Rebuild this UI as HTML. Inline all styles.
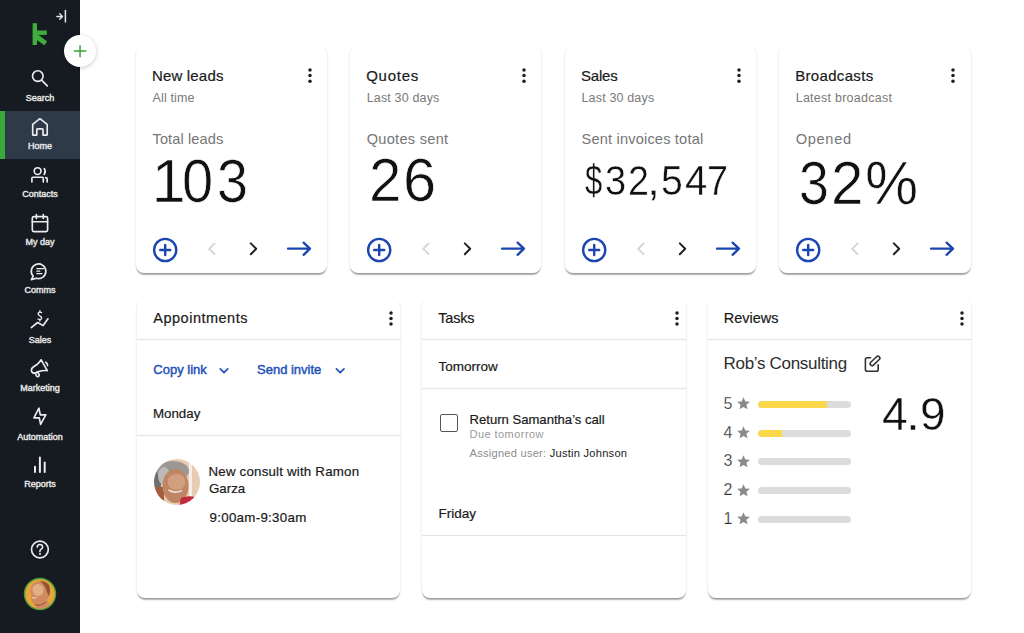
<!DOCTYPE html>
<html><head><meta charset="utf-8"><title>Keap dashboard</title>
<style>
html,body{margin:0;padding:0;width:1024px;height:633px;overflow:hidden;background:#ffffff;font-family:"Liberation Sans", sans-serif}
.t{position:absolute;white-space:nowrap}
</style></head><body>
<div style="position:absolute;left:0;top:0;width:80px;height:633px;background:#161b22"></div>
<div style="position:absolute;left:0;top:110.5px;width:80px;height:48px;background:#2e3a48"></div>
<div style="position:absolute;left:0;top:110.5px;width:5px;height:48px;background:#3aa83a"></div>
<svg style="position:absolute;left:0;top:0" width="80" height="60" viewBox="0 0 80 60">
<path d="M32.6 23.2 H37 V45 H32.6 Z" fill="#3fae3c"/>
<path d="M35 30.5 H46.8 V34.9 H35 Z" fill="#3fae3c"/>
<path d="M36 34.2 L37.6 34.2 L47.2 41.6 L44.4 45.2 L36 39.4 Z" fill="#3fae3c"/>
<path d="M56.8 16.45 H62.4 M59.7 13.6 L62.5 16.45 L59.7 19.3" stroke="#e6e6e6" stroke-width="1.35" fill="none" stroke-linecap="round" stroke-linejoin="round"/>
<path d="M65.4 10.5 V22" stroke="#e6e6e6" stroke-width="1.5" stroke-linecap="round"/>
</svg>
<svg style="position:absolute;left:0;top:0" width="80" height="633" viewBox="0 0 80 633" fill="none" stroke="#ececec" stroke-width="1.65" stroke-linecap="round" stroke-linejoin="round">
<circle cx="37.8" cy="76.1" r="5.3"/><path d="M41.8 80.3 L47.3 85.8"/>
<path d="M32.7 124.3 L39.9 118.6 L47.2 124.3 V134.4 Q47.2 135.1 46.5 135.1 H43 V129.6 Q43 128.9 42.3 128.9 H37.5 Q36.8 128.9 36.8 129.6 V135.1 H33.4 Q32.7 135.1 32.7 134.4 Z"/>
<circle cx="37.6" cy="171.1" r="3.4"/><path d="M31.9 182 V178.2 Q31.9 177.2 32.9 177.2 H42.3 Q43.3 177.2 43.3 178.2 V182"/>
<path d="M44.2 168.6 Q46.3 171.5 44.2 174.4"/><path d="M45.6 177.6 Q47.2 177.6 47.2 179 V182"/>
<rect x="32.3" y="216.6" width="15.3" height="15" rx="1.6"/><path d="M32.3 221.7 H47.6 M36.4 214.5 V218.6 M43.3 214.5 V218.6"/>
<path d="M33.2 276.2 A7.3 7.3 0 1 1 36.3 278.2 L31.4 279.6 Z"/><path d="M36.8 268.6 H43.6 M36.8 271.2 H39.8 M36.8 273.6 H42" stroke-width="1.2"/>
<path d="M31.3 327.6 L37.6 322.5 L43.1 325.6 L48 318.8"/>
<path d="M41.6 312.6 Q39.6 311.4 38.4 312.8 Q37.6 314.6 39.8 315.8 Q42.2 316.8 41.4 318.8 Q40.2 320.2 38 319" stroke-width="1.3"/><path d="M39.9 310.6 V312 M39.9 319.6 V321" stroke-width="1.3"/>
<path d="M41.2 359.8 L47.3 370.6 Q43 370.2 38.6 371.6 L35.2 373.1 Q32.2 373.6 31.5 371 Q31 368.4 33.6 366.8 L36.6 364.8 Q39.6 362.4 41.2 359.8 Z"/>
<path d="M37.2 371.8 L38.9 374.2 Q39.8 375.6 38.4 376.4 Q37 377 36.2 375.6 L35.4 373"/>
<path d="M45.8 362.2 Q47.6 363.2 47.6 365.6"/>
<path d="M38.9 408.2 L33.9 417.8 L39.3 417.8 L40.6 424.4 L45.8 414.8 L40.3 414.8 Z"/>
<path d="M35 466.8 V471.9 M39.9 457.6 V471.9 M44.7 462.6 V471.9" stroke-width="2"/>
<circle cx="39.9" cy="549.5" r="8.4"/>
<path d="M37.2 547.2 Q37.2 544.4 39.9 544.4 Q42.6 544.4 42.6 546.9 Q42.6 548.6 40.9 549.4 Q39.9 550 39.9 551.4 V551.8" stroke-width="1.5"/>
</svg>
<div style="position:absolute;left:39px;top:553.4px;width:2px;height:2px;border-radius:1px;background:#ececec"></div>
<svg style="position:absolute;left:23px;top:577px" width="34" height="34" viewBox="0 0 34 34">
<defs><clipPath id="cp2"><circle cx="17" cy="17" r="14.8"/></clipPath><filter id="bl2" x="-10%" y="-10%" width="120%" height="120%"><feGaussianBlur stdDeviation="0.6"/></filter></defs>
<circle cx="17" cy="17" r="16.2" fill="#4a9e3c"/><circle cx="17" cy="17" r="14.8" fill="#e8a63a"/>
<g clip-path="url(#cp2)"><g filter="url(#bl2)">
<path d="M7.5 12 Q8 6 14 4.5 Q21 3.5 25 7 Q28 11 27 17 Q26 21 24 23 L27 29 Q25 34 19 36 L11 36 L13 28 Q9.5 27 8.5 24 Q7.5 21 8.5 19 Q7 16 7.5 12 Z" fill="#d08c60"/>
<path d="M17 4 Q24 4 26.5 9 Q28 14 26 19 Q24 16 23 12 Q21 7 17 4 Z" fill="#8f5236"/>
<ellipse cx="15" cy="13" rx="5.5" ry="6" fill="#e2ae88"/>
<path d="M9 20.5 Q11.5 21.5 14 20.6" stroke="#f1d2bb" stroke-width="1.1" fill="none"/>
<path d="M12 27.5 Q17 30 23 25" stroke="#a45c3a" stroke-width="1.1" fill="none"/>
</g></g>
</svg>
<div class="t" style="left:-20.00px;width:120px;text-align:center;top:93.58px;font-size:9px;line-height:9px;color:#e9e9e9;font-weight:400;letter-spacing:0px;-webkit-text-stroke:0.4px #e9e9e9">Search</div>
<div class="t" style="left:-20.00px;width:120px;text-align:center;top:141.58px;font-size:9px;line-height:9px;color:#e9e9e9;font-weight:400;letter-spacing:0px;-webkit-text-stroke:0.4px #e9e9e9">Home</div>
<div class="t" style="left:-20.00px;width:120px;text-align:center;top:190.28px;font-size:9px;line-height:9px;color:#e9e9e9;font-weight:400;letter-spacing:0px;-webkit-text-stroke:0.4px #e9e9e9">Contacts</div>
<div class="t" style="left:-20.00px;width:120px;text-align:center;top:238.28px;font-size:9px;line-height:9px;color:#e9e9e9;font-weight:400;letter-spacing:0px;-webkit-text-stroke:0.4px #e9e9e9">My day</div>
<div class="t" style="left:-20.00px;width:120px;text-align:center;top:286.38px;font-size:9px;line-height:9px;color:#e9e9e9;font-weight:400;letter-spacing:0px;-webkit-text-stroke:0.4px #e9e9e9">Comms</div>
<div class="t" style="left:-20.00px;width:120px;text-align:center;top:335.68px;font-size:9px;line-height:9px;color:#e9e9e9;font-weight:400;letter-spacing:0px;-webkit-text-stroke:0.4px #e9e9e9">Sales</div>
<div class="t" style="left:-20.00px;width:120px;text-align:center;top:383.78px;font-size:9px;line-height:9px;color:#e9e9e9;font-weight:400;letter-spacing:0px;-webkit-text-stroke:0.4px #e9e9e9">Marketing</div>
<div class="t" style="left:-20.00px;width:120px;text-align:center;top:432.68px;font-size:9px;line-height:9px;color:#e9e9e9;font-weight:400;letter-spacing:0px;-webkit-text-stroke:0.4px #e9e9e9">Automation</div>
<div class="t" style="left:-20.00px;width:120px;text-align:center;top:479.78px;font-size:9px;line-height:9px;color:#e9e9e9;font-weight:400;letter-spacing:0px;-webkit-text-stroke:0.4px #e9e9e9">Reports</div>
<div style="position:absolute;left:63.5px;top:35px;width:32px;height:32px;border-radius:50%;background:#fff;box-shadow:0 1px 4px rgba(0,0,0,.22)"></div>
<svg style="position:absolute;left:63.5px;top:35px" width="32" height="32" viewBox="0 0 32 32"><path d="M9.9 16.1 H22.2 M16.05 10.2 V22.3" stroke="#38a238" stroke-width="1.5"/></svg>
<div style="position:absolute;background:#fff;border-radius:8px;box-shadow:0 2.5px 1.5px -1px rgba(0,0,0,.26),0 1px 1px 0 rgba(0,0,0,.14),0 1px 3px 0 rgba(0,0,0,.1);left:136px;top:45.5px;width:191.3px;height:227px"></div>
<div class="t" style="left:152.00px;top:67.80px;font-size:15px;line-height:15px;color:#1a1a1a;font-weight:400;letter-spacing:0.17px;-webkit-text-stroke:0.2px #1a1a1a">New leads</div>
<div class="t" style="left:152.50px;top:91.92px;font-size:12.5px;line-height:12.5px;color:#797979;font-weight:400;letter-spacing:0.15px;">All time</div>
<div class="t" style="left:152.50px;top:132.24px;font-size:14.6px;line-height:14.6px;color:#767676;font-weight:400;letter-spacing:0.1px;">Total leads</div>
<div class="t" style="left:151.56px;top:150.06px;font-size:61.6px;line-height:61.6px;color:#111;transform-origin:0 0;transform:scaleX(1.0000);-webkit-text-stroke:0.7px #fff">1</div>
<div class="t" style="left:182.01px;top:150.06px;font-size:61.6px;line-height:61.6px;color:#111;transform-origin:0 0;transform:scaleX(0.9102);-webkit-text-stroke:0.7px #fff">0</div>
<div class="t" style="left:216.68px;top:150.06px;font-size:61.6px;line-height:61.6px;color:#111;transform-origin:0 0;transform:scaleX(0.9042);-webkit-text-stroke:0.7px #fff">3</div>
<svg style="position:absolute;left:306.20px;top:65.60px" width="8" height="19.30" viewBox="0 0 8 19.30"><circle cx="4" cy="4.00" r="1.75" fill="#1e1e1e"/><circle cx="4" cy="9.60" r="1.75" fill="#1e1e1e"/><circle cx="4" cy="15.30" r="1.75" fill="#1e1e1e"/></svg>
<svg style="position:absolute;left:136px;top:230px" width="191" height="40" viewBox="0 0 191 40" fill="none" stroke-linecap="round" stroke-linejoin="round">
<circle cx="29.2" cy="20" r="11.1" stroke="#1b45b0" stroke-width="2.4"/><path d="M24.2 20 H34.2 M29.2 15 V25" stroke="#1b45b0" stroke-width="2.4"/>
<path d="M78.6 13.4 L73.2 18.8 L78.6 24.2" stroke="#d3d3d3" stroke-width="1.8"/>
<path d="M114.8 13.4 L120.2 18.8 L114.8 24.2" stroke="#222" stroke-width="2"/>
<path d="M152 18.7 H174 M167.6 12.6 L174 18.7 L167.6 24.8" stroke="#1b45b0" stroke-width="2.3"/>
</svg>
<div style="position:absolute;background:#fff;border-radius:8px;box-shadow:0 2.5px 1.5px -1px rgba(0,0,0,.26),0 1px 1px 0 rgba(0,0,0,.14),0 1px 3px 0 rgba(0,0,0,.1);left:350.2px;top:45.5px;width:191.3px;height:227px"></div>
<div class="t" style="left:366.20px;top:67.80px;font-size:15px;line-height:15px;color:#1a1a1a;font-weight:400;letter-spacing:0.75px;-webkit-text-stroke:0.2px #1a1a1a">Quotes</div>
<div class="t" style="left:366.70px;top:91.92px;font-size:12.5px;line-height:12.5px;color:#797979;font-weight:400;letter-spacing:0.16px;">Last 30 days</div>
<div class="t" style="left:366.70px;top:132.24px;font-size:14.6px;line-height:14.6px;color:#767676;font-weight:400;letter-spacing:0.28px;">Quotes sent</div>
<div class="t" style="left:368.68px;top:150.46px;font-size:61px;line-height:61px;color:#111;transform-origin:0 0;transform:scaleX(0.9563);-webkit-text-stroke:0.7px #fff">2</div>
<div class="t" style="left:403.16px;top:150.46px;font-size:61px;line-height:61px;color:#111;transform-origin:0 0;transform:scaleX(0.9779);-webkit-text-stroke:0.7px #fff">6</div>
<svg style="position:absolute;left:520.40px;top:65.60px" width="8" height="19.30" viewBox="0 0 8 19.30"><circle cx="4" cy="4.00" r="1.75" fill="#1e1e1e"/><circle cx="4" cy="9.60" r="1.75" fill="#1e1e1e"/><circle cx="4" cy="15.30" r="1.75" fill="#1e1e1e"/></svg>
<svg style="position:absolute;left:350.2px;top:230px" width="191" height="40" viewBox="0 0 191 40" fill="none" stroke-linecap="round" stroke-linejoin="round">
<circle cx="29.2" cy="20" r="11.1" stroke="#1b45b0" stroke-width="2.4"/><path d="M24.2 20 H34.2 M29.2 15 V25" stroke="#1b45b0" stroke-width="2.4"/>
<path d="M78.6 13.4 L73.2 18.8 L78.6 24.2" stroke="#d3d3d3" stroke-width="1.8"/>
<path d="M114.8 13.4 L120.2 18.8 L114.8 24.2" stroke="#222" stroke-width="2"/>
<path d="M152 18.7 H174 M167.6 12.6 L174 18.7 L167.6 24.8" stroke="#1b45b0" stroke-width="2.3"/>
</svg>
<div style="position:absolute;background:#fff;border-radius:8px;box-shadow:0 2.5px 1.5px -1px rgba(0,0,0,.26),0 1px 1px 0 rgba(0,0,0,.14),0 1px 3px 0 rgba(0,0,0,.1);left:565px;top:45.5px;width:191.4px;height:227px"></div>
<div class="t" style="left:581.00px;top:67.80px;font-size:15px;line-height:15px;color:#1a1a1a;font-weight:400;letter-spacing:-0.2px;-webkit-text-stroke:0.2px #1a1a1a">Sales</div>
<div class="t" style="left:581.50px;top:91.92px;font-size:12.5px;line-height:12.5px;color:#797979;font-weight:400;letter-spacing:0.16px;">Last 30 days</div>
<div class="t" style="left:581.50px;top:132.24px;font-size:14.6px;line-height:14.6px;color:#767676;font-weight:400;letter-spacing:0.18px;">Sent invoices total</div>
<div class="t" style="left:584.66px;top:160.05px;font-size:42px;line-height:42px;color:#111;transform-origin:0 0;transform:scaleX(0.7381);-webkit-text-stroke:0.4px #fff">$</div>
<div class="t" style="left:605.46px;top:160.05px;font-size:42px;line-height:42px;color:#111;transform-origin:0 0;transform:scaleX(0.9042);-webkit-text-stroke:0.4px #fff">3</div>
<div class="t" style="left:627.71px;top:160.05px;font-size:42px;line-height:42px;color:#111;transform-origin:0 0;transform:scaleX(0.8981);-webkit-text-stroke:0.4px #fff">2</div>
<div class="t" style="left:647.18px;top:160.05px;font-size:42px;line-height:42px;color:#111;transform-origin:0 0;transform:scaleX(1.1176);-webkit-text-stroke:0.4px #fff">,</div>
<div class="t" style="left:660.83px;top:160.05px;font-size:42px;line-height:42px;color:#111;transform-origin:0 0;transform:scaleX(0.9343);-webkit-text-stroke:0.4px #fff">5</div>
<div class="t" style="left:684.88px;top:160.05px;font-size:42px;line-height:42px;color:#111;transform-origin:0 0;transform:scaleX(0.9543);-webkit-text-stroke:0.4px #fff">4</div>
<div class="t" style="left:707.27px;top:160.05px;font-size:42px;line-height:42px;color:#111;transform-origin:0 0;transform:scaleX(0.9001);-webkit-text-stroke:0.4px #fff">7</div>
<svg style="position:absolute;left:735.20px;top:65.60px" width="8" height="19.30" viewBox="0 0 8 19.30"><circle cx="4" cy="4.00" r="1.75" fill="#1e1e1e"/><circle cx="4" cy="9.60" r="1.75" fill="#1e1e1e"/><circle cx="4" cy="15.30" r="1.75" fill="#1e1e1e"/></svg>
<svg style="position:absolute;left:565px;top:230px" width="191" height="40" viewBox="0 0 191 40" fill="none" stroke-linecap="round" stroke-linejoin="round">
<circle cx="29.2" cy="20" r="11.1" stroke="#1b45b0" stroke-width="2.4"/><path d="M24.2 20 H34.2 M29.2 15 V25" stroke="#1b45b0" stroke-width="2.4"/>
<path d="M78.6 13.4 L73.2 18.8 L78.6 24.2" stroke="#d3d3d3" stroke-width="1.8"/>
<path d="M114.8 13.4 L120.2 18.8 L114.8 24.2" stroke="#222" stroke-width="2"/>
<path d="M152 18.7 H174 M167.6 12.6 L174 18.7 L167.6 24.8" stroke="#1b45b0" stroke-width="2.3"/>
</svg>
<div style="position:absolute;background:#fff;border-radius:8px;box-shadow:0 2.5px 1.5px -1px rgba(0,0,0,.26),0 1px 1px 0 rgba(0,0,0,.14),0 1px 3px 0 rgba(0,0,0,.1);left:779.2px;top:45.5px;width:191.7px;height:227px"></div>
<div class="t" style="left:795.20px;top:67.80px;font-size:15px;line-height:15px;color:#1a1a1a;font-weight:400;letter-spacing:0.33px;-webkit-text-stroke:0.2px #1a1a1a">Broadcasts</div>
<div class="t" style="left:795.70px;top:91.92px;font-size:12.5px;line-height:12.5px;color:#797979;font-weight:400;letter-spacing:0.25px;">Latest broadcast</div>
<div class="t" style="left:795.70px;top:132.24px;font-size:14.6px;line-height:14.6px;color:#767676;font-weight:400;letter-spacing:0.7px;">Opened</div>
<div class="t" style="left:798.66px;top:153.09px;font-size:61.2px;line-height:61.2px;color:#111;transform-origin:0 0;transform:scaleX(0.8756);-webkit-text-stroke:0.7px #fff">3</div>
<div class="t" style="left:831.48px;top:153.09px;font-size:61.2px;line-height:61.2px;color:#111;transform-origin:0 0;transform:scaleX(0.9532);-webkit-text-stroke:0.7px #fff">2</div>
<div class="t" style="left:864.55px;top:153.09px;font-size:61.2px;line-height:61.2px;color:#111;transform-origin:0 0;transform:scaleX(0.9768);-webkit-text-stroke:0.7px #fff">%</div>
<svg style="position:absolute;left:949.40px;top:65.60px" width="8" height="19.30" viewBox="0 0 8 19.30"><circle cx="4" cy="4.00" r="1.75" fill="#1e1e1e"/><circle cx="4" cy="9.60" r="1.75" fill="#1e1e1e"/><circle cx="4" cy="15.30" r="1.75" fill="#1e1e1e"/></svg>
<svg style="position:absolute;left:779.2px;top:230px" width="191" height="40" viewBox="0 0 191 40" fill="none" stroke-linecap="round" stroke-linejoin="round">
<circle cx="29.2" cy="20" r="11.1" stroke="#1b45b0" stroke-width="2.4"/><path d="M24.2 20 H34.2 M29.2 15 V25" stroke="#1b45b0" stroke-width="2.4"/>
<path d="M78.6 13.4 L73.2 18.8 L78.6 24.2" stroke="#d3d3d3" stroke-width="1.8"/>
<path d="M114.8 13.4 L120.2 18.8 L114.8 24.2" stroke="#222" stroke-width="2"/>
<path d="M152 18.7 H174 M167.6 12.6 L174 18.7 L167.6 24.8" stroke="#1b45b0" stroke-width="2.3"/>
</svg>
<div style="position:absolute;background:#fff;border-radius:8px;box-shadow:0 2.5px 1.5px -1px rgba(0,0,0,.26),0 1px 1px 0 rgba(0,0,0,.14),0 1px 3px 0 rgba(0,0,0,.1);left:137.3px;top:299.4px;width:262.9px;height:298.8px"></div>
<div class="t" style="left:153.30px;top:311.03px;font-size:14.5px;line-height:14.5px;color:#1a1a1a;font-weight:400;letter-spacing:0.5px;-webkit-text-stroke:0.2px #1a1a1a">Appointments</div>
<svg style="position:absolute;left:387.20px;top:308.60px" width="8" height="19.00" viewBox="0 0 8 19.00"><circle cx="4" cy="4.00" r="1.75" fill="#1e1e1e"/><circle cx="4" cy="9.50" r="1.75" fill="#1e1e1e"/><circle cx="4" cy="15.00" r="1.75" fill="#1e1e1e"/></svg>
<div style="position:absolute;left:137.3px;top:339px;width:262.9px;height:1px;background:#e4e4e4;box-shadow:0 0 1.5px rgba(0,0,0,.09)"></div>
<div style="position:absolute;background:#fff;border-radius:8px;box-shadow:0 2.5px 1.5px -1px rgba(0,0,0,.26),0 1px 1px 0 rgba(0,0,0,.14),0 1px 3px 0 rgba(0,0,0,.1);left:422.3px;top:299.4px;width:263.4px;height:298.8px"></div>
<div class="t" style="left:438.30px;top:311.03px;font-size:14.5px;line-height:14.5px;color:#1a1a1a;font-weight:400;letter-spacing:-0.2px;-webkit-text-stroke:0.2px #1a1a1a">Tasks</div>
<svg style="position:absolute;left:672.70px;top:308.60px" width="8" height="19.00" viewBox="0 0 8 19.00"><circle cx="4" cy="4.00" r="1.75" fill="#1e1e1e"/><circle cx="4" cy="9.50" r="1.75" fill="#1e1e1e"/><circle cx="4" cy="15.00" r="1.75" fill="#1e1e1e"/></svg>
<div style="position:absolute;left:422.3px;top:339px;width:263.4px;height:1px;background:#e4e4e4;box-shadow:0 0 1.5px rgba(0,0,0,.09)"></div>
<div style="position:absolute;background:#fff;border-radius:8px;box-shadow:0 2.5px 1.5px -1px rgba(0,0,0,.26),0 1px 1px 0 rgba(0,0,0,.14),0 1px 3px 0 rgba(0,0,0,.1);left:707.7px;top:299.4px;width:263.2px;height:298.8px"></div>
<div class="t" style="left:723.70px;top:311.03px;font-size:14.5px;line-height:14.5px;color:#1a1a1a;font-weight:400;letter-spacing:0px;-webkit-text-stroke:0.2px #1a1a1a">Reviews</div>
<svg style="position:absolute;left:957.90px;top:308.60px" width="8" height="19.00" viewBox="0 0 8 19.00"><circle cx="4" cy="4.00" r="1.75" fill="#1e1e1e"/><circle cx="4" cy="9.50" r="1.75" fill="#1e1e1e"/><circle cx="4" cy="15.00" r="1.75" fill="#1e1e1e"/></svg>
<div style="position:absolute;left:707.7px;top:339px;width:263.2px;height:1px;background:#e4e4e4;box-shadow:0 0 1.5px rgba(0,0,0,.09)"></div>
<div class="t" style="left:153.30px;top:362.70px;font-size:13px;line-height:13px;color:#2352ba;font-weight:400;letter-spacing:0px;-webkit-text-stroke:0.45px #2352ba">Copy link</div>
<div class="t" style="left:257.00px;top:362.70px;font-size:13px;line-height:13px;color:#2352ba;font-weight:400;letter-spacing:0px;-webkit-text-stroke:0.45px #2352ba">Send invite</div>
<svg style="position:absolute;left:137px;top:360.8px" width="263" height="20" viewBox="0 0 263 20" fill="none" stroke="#2352ba" stroke-width="1.7" stroke-linecap="round" stroke-linejoin="round">
<path d="M83.2 7.8 L87 11.6 L90.8 7.8"/><path d="M199.4 7.8 L203.2 11.6 L207 7.8"/></svg>
<div class="t" style="left:153.00px;top:406.64px;font-size:13.3px;line-height:13.3px;color:#1a1a1a;font-weight:400;letter-spacing:0px;-webkit-text-stroke:0.2px #1a1a1a">Monday</div>
<div style="position:absolute;left:137.3px;top:435px;width:262.9px;height:1px;background:#e4e4e4;box-shadow:0 0 1.5px rgba(0,0,0,.09)"></div>
<svg style="position:absolute;left:153.8px;top:458.8px" width="46" height="46" viewBox="0 0 46 46">
<defs><clipPath id="cp"><circle cx="23" cy="23" r="23"/></clipPath><filter id="bl" x="-10%" y="-10%" width="120%" height="120%"><feGaussianBlur stdDeviation="0.7"/></filter></defs>
<g clip-path="url(#cp)"><g filter="url(#bl)">
<rect x="-2" y="-2" width="50" height="50" fill="#e8ccb2"/>
<rect x="35" y="-2" width="3" height="50" fill="#f6eee8"/>
<rect x="-2" y="8" width="9" height="22" fill="#6f6d6b"/>
<ellipse cx="19" cy="12" rx="16" ry="10" fill="#9a9794"/>
<ellipse cx="10" cy="17" rx="6" ry="9" fill="#bdb9b5"/>
<rect x="-2" y="28" width="12" height="20" fill="#a35b3c"/>
<ellipse cx="21.5" cy="27" rx="13" ry="17" fill="#bf8565"/>
<ellipse cx="22.5" cy="23" rx="9" ry="8" fill="#cf9f80"/>
<path d="M14.5 31 Q21 35 28 31.5" stroke="#efe0d6" stroke-width="1.8" fill="none"/>
<path d="M25 48 L27 39 Q34 36 41 38 L43 48 Z" fill="#c22a3c"/>
<path d="M5 36 L11 48 H2 Z" fill="#c22a3c"/>
</g></g></svg>
<div class="t" style="left:208.50px;top:465.14px;font-size:13.3px;line-height:13.3px;color:#1a1a1a;font-weight:400;letter-spacing:0.2px;-webkit-text-stroke:0.2px #1a1a1a">New consult with Ramon</div>
<div class="t" style="left:209.00px;top:482.14px;font-size:13.3px;line-height:13.3px;color:#1a1a1a;font-weight:400;letter-spacing:0px;-webkit-text-stroke:0.2px #1a1a1a">Garza</div>
<div class="t" style="left:209.50px;top:511.24px;font-size:13.3px;line-height:13.3px;color:#1a1a1a;font-weight:400;letter-spacing:0.3px;-webkit-text-stroke:0.2px #1a1a1a">9:00am-9:30am</div>
<div class="t" style="left:438.50px;top:360.27px;font-size:13.5px;line-height:13.5px;color:#1a1a1a;font-weight:400;letter-spacing:0px;-webkit-text-stroke:0.2px #1a1a1a">Tomorrow</div>
<div style="position:absolute;left:422.3px;top:388px;width:263.4px;height:1px;background:#e4e4e4;box-shadow:0 0 1.5px rgba(0,0,0,.09)"></div>
<div style="position:absolute;left:440.3px;top:414.4px;width:15.6px;height:15.6px;border:1.5px solid #555;border-radius:2px"></div>
<div class="t" style="left:469.50px;top:412.51px;font-size:13.1px;line-height:13.1px;color:#1a1a1a;font-weight:400;letter-spacing:0px;-webkit-text-stroke:0.2px #1a1a1a">Return Samantha’s call</div>
<div class="t" style="left:469.50px;top:428.99px;font-size:11px;line-height:11px;color:#9a9a9a;font-weight:400;letter-spacing:0.45px;">Due tomorrow</div>
<div class="t" style="left:469.50px;top:447.70px;font-size:11.1px;line-height:11.1px;color:#8c8c8c;font-weight:400;letter-spacing:0.25px;">Assigned user: <span style="color:#1a1a1a">Justin Johnson</span></div>
<div class="t" style="left:438.50px;top:507.17px;font-size:13.5px;line-height:13.5px;color:#1a1a1a;font-weight:400;letter-spacing:0px;-webkit-text-stroke:0.2px #1a1a1a">Friday</div>
<div style="position:absolute;left:422.3px;top:535px;width:263.4px;height:1px;background:#e4e4e4;box-shadow:0 0 1.5px rgba(0,0,0,.09)"></div>
<div class="t" style="left:723.50px;top:354.71px;font-size:17px;line-height:17px;color:#2e2e2e;font-weight:400;letter-spacing:-0.3px;x:0">Rob’s Consulting</div>
<svg style="position:absolute;left:860px;top:353px" width="24" height="22" viewBox="0 0 24 22" fill="none" stroke="#333" stroke-width="1.6" stroke-linecap="round" stroke-linejoin="round">
<path d="M10.6 4.8 H7.2 Q5.4 4.8 5.4 6.6 V16.5 Q5.4 18.3 7.2 18.3 H16.4 Q18.2 18.3 18.2 16.5 V11.8"/>
<rect x="9.05" y="5.95" width="11.9" height="3.9" rx="1.95" transform="rotate(-44 15 7.9)"/></svg>
<div class="t" style="left:723.60px;top:395.76px;font-size:16px;line-height:16px;color:#2a2a2a;font-weight:400;letter-spacing:0px;-webkit-text-stroke:0.25px #fff">5</div>
<svg style="position:absolute;left:735.9px;top:396.3px" width="15" height="15" viewBox="0 0 24 24"><path d="M12 1.8 L14.9 8.6 L22.3 9.2 L16.7 14 L18.4 21.3 L12 17.4 L5.6 21.3 L7.3 14 L1.7 9.2 L9.1 8.6 Z" fill="#8a8a8a"/></svg>
<div style="position:absolute;left:758.2px;top:400.6px;width:92.5px;height:7.2px;border-radius:3.6px;background:#dcdcdc;overflow:hidden"><div style="width:69px;height:100%;background:#fbd84a;border-radius:3.6px 0 0 3.6px"></div></div>
<div class="t" style="left:723.60px;top:424.66px;font-size:16px;line-height:16px;color:#2a2a2a;font-weight:400;letter-spacing:0px;-webkit-text-stroke:0.25px #fff">4</div>
<svg style="position:absolute;left:735.9px;top:425.2px" width="15" height="15" viewBox="0 0 24 24"><path d="M12 1.8 L14.9 8.6 L22.3 9.2 L16.7 14 L18.4 21.3 L12 17.4 L5.6 21.3 L7.3 14 L1.7 9.2 L9.1 8.6 Z" fill="#8a8a8a"/></svg>
<div style="position:absolute;left:758.2px;top:429.5px;width:92.5px;height:7.2px;border-radius:3.6px;background:#dcdcdc;overflow:hidden"><div style="width:23.4px;height:100%;background:#fbd84a;border-radius:3.6px 0 0 3.6px"></div></div>
<div class="t" style="left:723.60px;top:453.16px;font-size:16px;line-height:16px;color:#2a2a2a;font-weight:400;letter-spacing:0px;-webkit-text-stroke:0.25px #fff">3</div>
<svg style="position:absolute;left:735.9px;top:453.7px" width="15" height="15" viewBox="0 0 24 24"><path d="M12 1.8 L14.9 8.6 L22.3 9.2 L16.7 14 L18.4 21.3 L12 17.4 L5.6 21.3 L7.3 14 L1.7 9.2 L9.1 8.6 Z" fill="#8a8a8a"/></svg>
<div style="position:absolute;left:758.2px;top:458.0px;width:92.5px;height:7.2px;border-radius:3.6px;background:#dcdcdc;overflow:hidden"></div>
<div class="t" style="left:723.60px;top:482.06px;font-size:16px;line-height:16px;color:#2a2a2a;font-weight:400;letter-spacing:0px;-webkit-text-stroke:0.25px #fff">2</div>
<svg style="position:absolute;left:735.9px;top:482.6px" width="15" height="15" viewBox="0 0 24 24"><path d="M12 1.8 L14.9 8.6 L22.3 9.2 L16.7 14 L18.4 21.3 L12 17.4 L5.6 21.3 L7.3 14 L1.7 9.2 L9.1 8.6 Z" fill="#8a8a8a"/></svg>
<div style="position:absolute;left:758.2px;top:486.9px;width:92.5px;height:7.2px;border-radius:3.6px;background:#dcdcdc;overflow:hidden"></div>
<div class="t" style="left:723.60px;top:510.66px;font-size:16px;line-height:16px;color:#2a2a2a;font-weight:400;letter-spacing:0px;-webkit-text-stroke:0.25px #fff">1</div>
<svg style="position:absolute;left:735.9px;top:511.2px" width="15" height="15" viewBox="0 0 24 24"><path d="M12 1.8 L14.9 8.6 L22.3 9.2 L16.7 14 L18.4 21.3 L12 17.4 L5.6 21.3 L7.3 14 L1.7 9.2 L9.1 8.6 Z" fill="#8a8a8a"/></svg>
<div style="position:absolute;left:758.2px;top:515.5px;width:92.5px;height:7.2px;border-radius:3.6px;background:#dcdcdc;overflow:hidden"></div>
<div class="t" style="left:881.64px;top:391.45px;font-size:46.6px;line-height:46.6px;color:#111;transform-origin:0 0;transform:scaleX(0.9921);-webkit-text-stroke:0.4px #fff">4</div>
<div class="t" style="left:906.35px;top:391.45px;font-size:46.6px;line-height:46.6px;color:#111;transform-origin:0 0;transform:scaleX(1.0730);-webkit-text-stroke:0.4px #fff">.</div>
<div class="t" style="left:919.64px;top:391.45px;font-size:46.6px;line-height:46.6px;color:#111;transform-origin:0 0;transform:scaleX(0.9847);-webkit-text-stroke:0.4px #fff">9</div>
</body></html>
